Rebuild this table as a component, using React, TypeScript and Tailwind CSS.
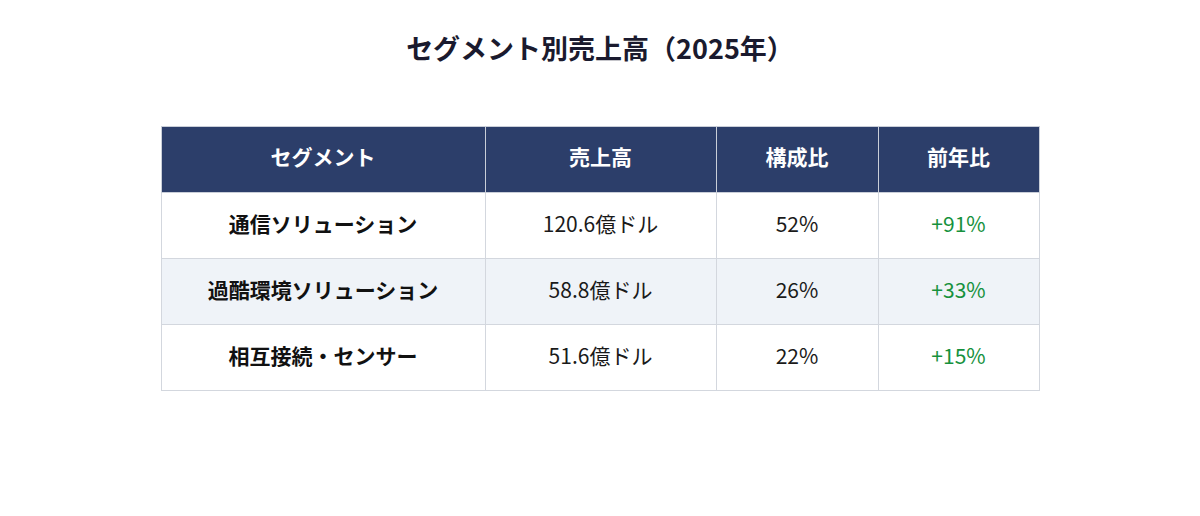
const rows = [
  { name: "通信ソリューション", sales: "120.6億ドル", share: "52%", yoy: "+91%" },
  { name: "過酷環境ソリューション", sales: "58.8億ドル", share: "26%", yoy: "+33%" },
  { name: "相互接続・センサー", sales: "51.6億ドル", share: "22%", yoy: "+15%" },
];

export default function App() {
  return (
    <div
      className="w-[1200px] h-[516px] bg-white pt-[29px]"
      style={{ fontFamily: '"Noto Sans CJK JP", "Noto Sans", sans-serif' }}
    >
      <h1 className="text-center text-[27px] leading-[38px] font-bold text-[#1a1a2e]">
        セグメント別売上高（2025年）
      </h1>

      <table className="mx-auto mt-[59px] w-[878px] border-collapse table-fixed text-[21px]">
        <colgroup>
          <col className="w-[324px]" />
          <col className="w-[231px]" />
          <col className="w-[162px]" />
          <col className="w-[161px]" />
        </colgroup>
        <thead>
          <tr className="bg-[#2c3e6a] text-white h-[66px]">
            <th className="border border-[#c9ced8] pb-[5px] font-bold">セグメント</th>
            <th className="border border-[#c9ced8] pb-[5px] font-bold">売上高</th>
            <th className="border border-[#c9ced8] pb-[5px] font-bold">構成比</th>
            <th className="border border-[#c9ced8] pb-[5px] font-bold">前年比</th>
          </tr>
        </thead>
        <tbody>
          {rows.map((r, i) => (
            <tr key={r.name} className={i % 2 === 1 ? "h-[66px] bg-[#eff3f8]" : "h-[66px] bg-white"}>
              <td className="border border-[#d3d7de] pb-[4px] text-center font-bold text-[#111111]">{r.name}</td>
              <td className="border border-[#d3d7de] pb-[4px] text-center text-[#1a1a1a]">{r.sales}</td>
              <td className="border border-[#d3d7de] pb-[4px] text-center text-[#1a1a1a]">{r.share}</td>
              <td className="border border-[#d3d7de] pb-[4px] text-center text-[#16913d]">{r.yoy}</td>
            </tr>
          ))}
        </tbody>
      </table>
    </div>
  );
}
